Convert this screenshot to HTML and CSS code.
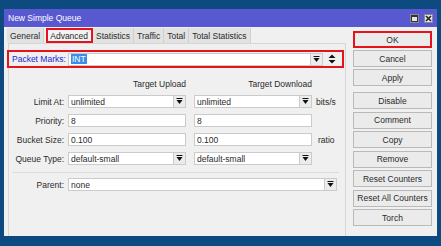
FILE: index.html
```
<!DOCTYPE html>
<html lang="en">
<head>
  <meta charset="UTF-8" />
  <title>New Simple Queue</title>
  <link rel="stylesheet" href="styles.css">
</head>
<body>
  <div class="window">
    <div class="titlebar">
      <span class="title">New Simple Queue</span>
      <div class="win-btns">
        <span class="wbtn"><svg width="7" height="7" viewBox="0 0 7 7"><rect x="0.5" y="0.5" width="6" height="6" fill="none" stroke="#333" stroke-width="1"/><line x1="0.5" y1="1.5" x2="6.5" y2="1.5" stroke="#333"/></svg></span>
        <span class="wbtn"><svg width="7" height="7" viewBox="0 0 7 7"><path d="M1 1 L6 6 M6 1 L1 6" stroke="#222" stroke-width="1.6"/></svg></span>
      </div>
    </div>

    <div class="win-body">
      <div class="main">
        <div class="tabs">
          <div class="tab">General</div>
          <div class="tab active">Advanced</div>
          <div class="tab">Statistics</div>
          <div class="tab">Traffic</div>
          <div class="tab">Total</div>
          <div class="tab">Total Statistics</div>
        </div>

        <div class="panel">
          <div class="marks-row">
            <span class="marks-label">Packet Marks:</span>
            <div class="field marks-field"><span class="selected">INT</span></div>
            <span class="dd"><svg width="7" height="7" viewBox="0 0 7 7"><line x1="0.5" y1="0.5" x2="6.5" y2="0.5" stroke="#111" stroke-width="1"/><path d="M0.5 2 L6.5 2 L3.5 6 Z" fill="#111"/></svg></span>
            <span class="updown"><svg width="8" height="10" viewBox="0 0 8 10"><path d="M0.5 4 L7.5 4 L4 0.5 Z M0.5 6 L7.5 6 L4 9.5 Z" fill="#111"/></svg></span>
          </div>

          <div class="heads">
            <span class="label"></span>
            <span class="head">Target Upload</span>
            <span class="head">Target Download</span>
          </div>

          <div class="row">
            <span class="label">Limit At:</span>
            <div class="cell">
              <div class="field">unlimited</div>
              <span class="dd"><svg width="7" height="7" viewBox="0 0 7 7"><line x1="0.5" y1="0.5" x2="6.5" y2="0.5" stroke="#111"/><path d="M0.5 2 L6.5 2 L3.5 6 Z" fill="#111"/></svg></span>
            </div>
            <div class="cell">
              <div class="field">unlimited</div>
              <span class="dd"><svg width="7" height="7" viewBox="0 0 7 7"><line x1="0.5" y1="0.5" x2="6.5" y2="0.5" stroke="#111"/><path d="M0.5 2 L6.5 2 L3.5 6 Z" fill="#111"/></svg></span>
            </div>
            <span class="unit">bits/s</span>
          </div>

          <div class="row">
            <span class="label">Priority:</span>
            <div class="cell"><div class="field">8</div></div>
            <div class="cell"><div class="field">8</div></div>
          </div>

          <div class="row">
            <span class="label">Bucket Size:</span>
            <div class="cell"><div class="field">0.100</div></div>
            <div class="cell"><div class="field">0.100</div></div>
            <span class="unit ratio">ratio</span>
          </div>

          <div class="row">
            <span class="label">Queue Type:</span>
            <div class="cell">
              <div class="field">default-small</div>
              <span class="dd"><svg width="7" height="7" viewBox="0 0 7 7"><line x1="0.5" y1="0.5" x2="6.5" y2="0.5" stroke="#111"/><path d="M0.5 2 L6.5 2 L3.5 6 Z" fill="#111"/></svg></span>
            </div>
            <div class="cell">
              <div class="field">default-small</div>
              <span class="dd"><svg width="7" height="7" viewBox="0 0 7 7"><line x1="0.5" y1="0.5" x2="6.5" y2="0.5" stroke="#111"/><path d="M0.5 2 L6.5 2 L3.5 6 Z" fill="#111"/></svg></span>
            </div>
          </div>

          <div class="sep"></div>

          <div class="row parent-row">
            <span class="label">Parent:</span>
            <div class="cell parent-cell">
              <div class="field">none</div>
              <span class="dd"><svg width="7" height="7" viewBox="0 0 7 7"><line x1="0.5" y1="0.5" x2="6.5" y2="0.5" stroke="#111"/><path d="M0.5 2 L6.5 2 L3.5 6 Z" fill="#111"/></svg></span>
            </div>
          </div>
        </div>
      </div>

      <div class="side">
        <button class="btn ok">OK</button>
        <button class="btn">Cancel</button>
        <button class="btn">Apply</button>
        <div class="btn-group">
          <button class="btn">Disable</button>
          <button class="btn">Comment</button>
          <button class="btn">Copy</button>
          <button class="btn">Remove</button>
          <button class="btn">Reset Counters</button>
          <button class="btn">Reset All Counters</button>
          <button class="btn">Torch</button>
        </div>
      </div>
    </div>
  </div>
</body>
</html>
```

FILE: styles.css
```
body {
  margin: 0;
  background-color: #0c4a80;
  font-family: 'Liberation Sans', Arial, sans-serif;
  font-size: 8.5px;
  color: #2a2a2a;
}

.window {
  margin: 9px 0 0 4px;
  width: 433px;
  height: 227px;
  background-color: #f0f0f0;
}

.titlebar {
  height: 18px;
  background-color: #5858d0;
  color: #fff;
  display: flex;
  align-items: center;
  justify-content: space-between;
  padding: 0 4px;
  font-size: 8.5px;
}

.win-btns {
  display: flex;
  gap: 5px;
}

.wbtn {
  width: 9px;
  height: 9px;
  box-sizing: border-box;
  background-color: #e4e4e4;
  border: 1px solid #8a8a8a;
  display: flex;
  align-items: center;
  justify-content: center;
}

.wbtn svg {
  display: block;
}

.win-body {
  display: flex;
  height: 209px;
}

.main {
  width: 342px;
  padding-left: 4px;
  box-sizing: border-box;
  display: flex;
  flex-direction: column;
}

/* tabs */
.tabs {
  display: flex;
  height: 15px;
  margin: 1px 0 0 -1px;
}

.tab {
  padding: 0 3px;
  display: flex;
  align-items: center;
  background-color: #e2e2e2;
  border-right: 1px solid #d0d0d0;
  color: #2a2a2a;
}

.tab.active {
  margin: 0 0 0 2px;
  background-color: #f4f4f4;
  outline: 2px solid #e6121c;
  outline-offset: -2px;
  padding: 0 4px;
}

/* panel */
.panel {
  flex: 1;
  border: 1px solid #d6d6d6;
  border-bottom: none;
  display: flex;
  flex-direction: column;
}

.marks-row {
  display: flex;
  align-items: center;
  height: 18px;
  width: 337px;
  box-sizing: border-box;
  margin: 6px 0 0 -2px;
  border: 2px solid #e6121c;
}

.marks-label {
  width: 59px;
  padding-left: 3px;
  box-sizing: border-box;
  color: #1c1cd8;
}

.field {
  flex: 1;
  height: 13px;
  box-sizing: border-box;
  background-color: #fff;
  border: 1px solid #cbcbcb;
  padding-left: 2px;
  display: flex;
  align-items: center;
  white-space: nowrap;
  overflow: hidden;
}

.marks-field {
  flex: none;
  width: 243px;
}

.selected {
  background-color: #3b8ee8;
  color: #fff;
  padding: 0 1px;
}

.dd {
  width: 12px;
  height: 13px;
  box-sizing: border-box;
  border: 1px solid #cbcbcb;
  border-left: none;
  background-color: #ececec;
  display: flex;
  align-items: center;
  justify-content: center;
}

.updown {
  width: 12px;
  height: 13px;
  margin-left: 3px;
  display: flex;
  align-items: center;
  justify-content: center;
}

.heads {
  display: flex;
  height: 12px;
  margin-top: 10px;
  align-items: center;
}

.head {
  width: 118px;
  text-align: right;
  margin-right: 8px;
}

.label {
  width: 55px;
  margin-right: 4px;
  text-align: right;
  flex: none;
}

.row {
  display: flex;
  align-items: center;
  height: 13px;
  margin-top: 6px;
}

.heads + .row {
  margin-top: 5px;
}

.cell {
  display: flex;
  width: 118px;
  margin-right: 8px;
}

.unit {
  margin-left: -4px;
}

.unit.ratio {
  margin-left: -2px;
}

.sep {
  height: 1px;
  background-color: #dcdcdc;
  margin: 7px 6px 0 3px;
}

.parent-row {
  margin-top: 5px;
}

.cell.parent-cell {
  width: 270px;
}

/* side buttons */
.side {
  width: 91px;
  padding: 4px 0 0 7px;
  box-sizing: border-box;
  display: flex;
  flex-direction: column;
  gap: 2px;
}

.btn {
  width: 79px;
  height: 17px;
  padding: 0;
  background-color: #ebebeb;
  border: 1px solid #b9b9b9;
  font-family: 'Liberation Sans', Arial, sans-serif;
  font-size: 8.5px;
  color: #2a2a2a;
}

.btn.ok {
  border: 2px solid #e6121c;
}

.btn-group {
  display: flex;
  flex-direction: column;
  gap: 2.5px;
  margin-top: 4px;
}
```
